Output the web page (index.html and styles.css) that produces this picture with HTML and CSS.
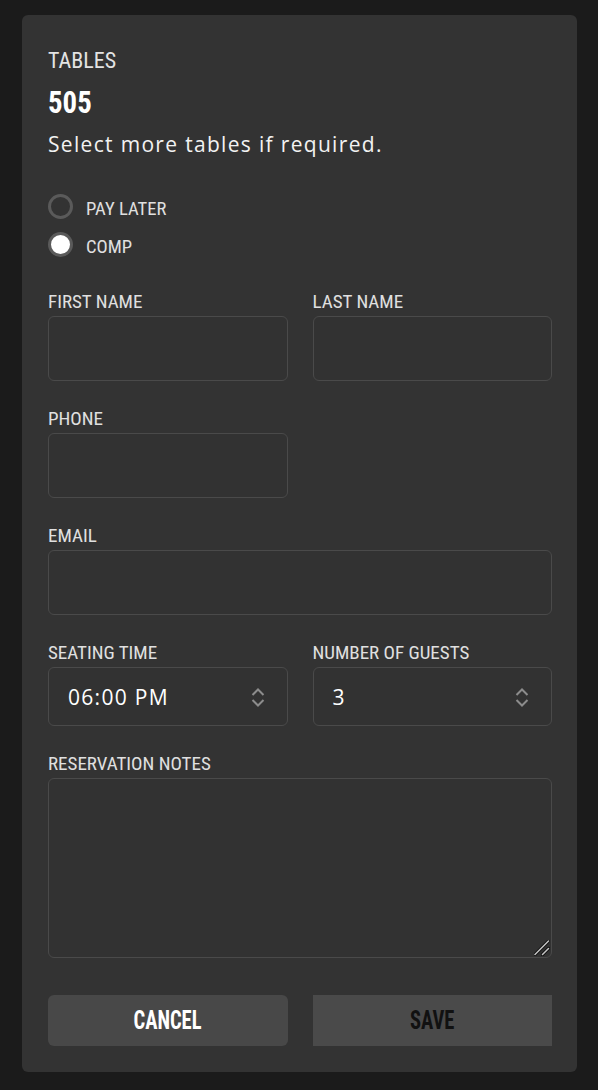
FILE: index.html
```html
<!DOCTYPE html>
<html lang="en">
<head>
<meta charset="utf-8">
<title>Reservation</title>
<link rel="stylesheet" href="styles.css">
</head>
<body>
<div class="card">
  <div class="eyebrow">TABLES</div>
  <div class="table-num"><span class="num-text">505</span></div>
  <p class="hint">Select more tables if required.</p>

  <div class="radios">
    <label class="radio"><span class="dot"></span><span class="radio-text">PAY LATER</span></label>
    <label class="radio"><span class="dot checked"></span><span class="radio-text">COMP</span></label>
  </div>

  <div class="fields">
    <div class="field">
      <label class="flabel">FIRST NAME</label>
      <input class="input" type="text">
    </div>
    <div class="field">
      <label class="flabel">LAST NAME</label>
      <input class="input" type="text">
    </div>
    <div class="field">
      <label class="flabel">PHONE</label>
      <input class="input" type="text">
    </div>
    <div class="field"></div>
    <div class="field wide">
      <label class="flabel">EMAIL</label>
      <input class="input" type="text">
    </div>
    <div class="field">
      <label class="flabel">SEATING TIME</label>
      <div class="select">
        <span class="select-value">06:00 PM</span>
        <svg class="chev" width="14" height="20" viewBox="0 0 14 20"><path d="M1.5 8 L7 2.5 L12.5 8 M1.5 13 L7 18.5 L12.5 13" fill="none" stroke="#8c8c8c" stroke-width="2"/></svg>
      </div>
    </div>
    <div class="field">
      <label class="flabel">NUMBER OF GUESTS</label>
      <div class="select">
        <span class="select-value">3</span>
        <svg class="chev" width="14" height="20" viewBox="0 0 14 20"><path d="M1.5 8 L7 2.5 L12.5 8 M1.5 13 L7 18.5 L12.5 13" fill="none" stroke="#8c8c8c" stroke-width="2"/></svg>
      </div>
    </div>
    <div class="field wide">
      <label class="flabel">RESERVATION NOTES</label>
      <div class="notes-wrap">
        <textarea class="notes"></textarea>
        <svg class="grip" width="16" height="16" viewBox="0 0 16 16">
          <path d="M1 14.5 L14.5 1 M8.5 14.5 L14.5 8.5" fill="none" stroke="#111111" stroke-width="3.2" stroke-linecap="round"/>
          <path d="M1 14.5 L14.5 1 M8.5 14.5 L14.5 8.5" fill="none" stroke="#c4c4c4" stroke-width="1.5" stroke-linecap="round"/>
        </svg>
      </div>
    </div>
  </div>

  <div class="actions">
    <button class="btn cancel"><span class="btn-text">CANCEL</span></button>
    <button class="btn save"><span class="btn-text">SAVE</span></button>
  </div>
</div>
</body>
</html>
```

FILE: styles.css
```css
html, body {
  margin: 0;
  padding: 0;
  background: #1b1b1b;
}

body {
  font-family: "Roboto Condensed", "Roboto", "Liberation Sans", sans-serif;
  color: #e2e2e2;
}

.card {
  box-sizing: border-box;
  width: 555px;
  margin: 15px 0 0 22px;
  padding: 33px 25px 26px 26px;
  background: #333333;
  border-radius: 6px;
}

.eyebrow {
  font-size: 22px;
  line-height: 26px;
  color: #e4e4e4;
}

.table-num {
  margin-top: 11px;
  font-size: 31px;
  line-height: 36px;
  font-weight: 700;
  color: #ffffff;
}

.num-text {
  display: inline-block;
  transform: scaleX(0.93);
  transform-origin: left center;
}

.hint {
  margin: 10px 0 0;
  font-family: "Open Sans", "Noto Sans", sans-serif;
  font-size: 21px;
  line-height: 26px;
  letter-spacing: 1.32px;
  color: #f2f2f2;
}

.radios {
  margin-top: 37px;
  display: flex;
  flex-direction: column;
  gap: 13px;
}

.radio {
  display: flex;
  align-items: center;
  height: 25px;
}

.dot {
  box-sizing: border-box;
  width: 25px;
  height: 25px;
  border-radius: 50%;
  border: 3px solid #5a5a5a;
  flex: none;
}

.dot.checked {
  background: #ffffff;
}

.radio-text {
  margin-left: 13px;
  margin-top: 4px;
  font-size: 18.6px;
  line-height: 22px;
  color: #e0e0e0;
}

.fields {
  margin-top: 34px;
  display: grid;
  grid-template-columns: 1fr 1fr;
  column-gap: 25px;
  row-gap: 27px;
}

.field {
  display: flex;
  flex-direction: column;
  min-width: 0;
}

.field.wide {
  grid-column: 1 / 3;
}

.flabel {
  font-size: 19px;
  line-height: 22px;
  color: #e0e0e0;
  margin-bottom: 3px;
}

.input {
  box-sizing: border-box;
  height: 65px;
  width: 100%;
  margin: 0;
  background: #323232;
  border: 1px solid #4a4a4a;
  border-radius: 6px;
  outline: none;
}

.select {
  box-sizing: border-box;
  height: 59px;
  display: flex;
  align-items: center;
  justify-content: space-between;
  padding: 0 22px 0 19px;
  background: #323232;
  border: 1px solid #4a4a4a;
  border-radius: 6px;
}

.select-value {
  font-family: "Open Sans", "Noto Sans", sans-serif;
  font-size: 21px;
  letter-spacing: 1.3px;
  color: #ffffff;
}

.chev {
  display: block;
  flex: none;
}

.notes-wrap {
  position: relative;
}

.notes {
  box-sizing: border-box;
  display: block;
  width: 100%;
  height: 180px;
  margin: 0;
  background: #323232;
  border: 1px solid #4a4a4a;
  border-radius: 6px;
  resize: none;
  outline: none;
}

.grip {
  position: absolute;
  right: 2px;
  bottom: 2px;
  display: block;
}

.actions {
  margin-top: 37px;
  display: grid;
  grid-template-columns: 1fr 1fr;
  column-gap: 25px;
}

.btn {
  height: 51px;
  border: none;
  margin: 0;
  padding: 0;
  font-family: "Roboto Condensed", "Roboto", sans-serif;
  font-weight: 700;
  font-size: 25px;
  cursor: pointer;
}

.btn-text {
  display: inline-block;
  transform: scaleX(0.82);
}

.cancel {
  background: #484848;
  color: #ffffff;
  border-radius: 6px;
}

.save {
  background: #4a4a4a;
  color: #111111;
  border-radius: 0;
}
```
